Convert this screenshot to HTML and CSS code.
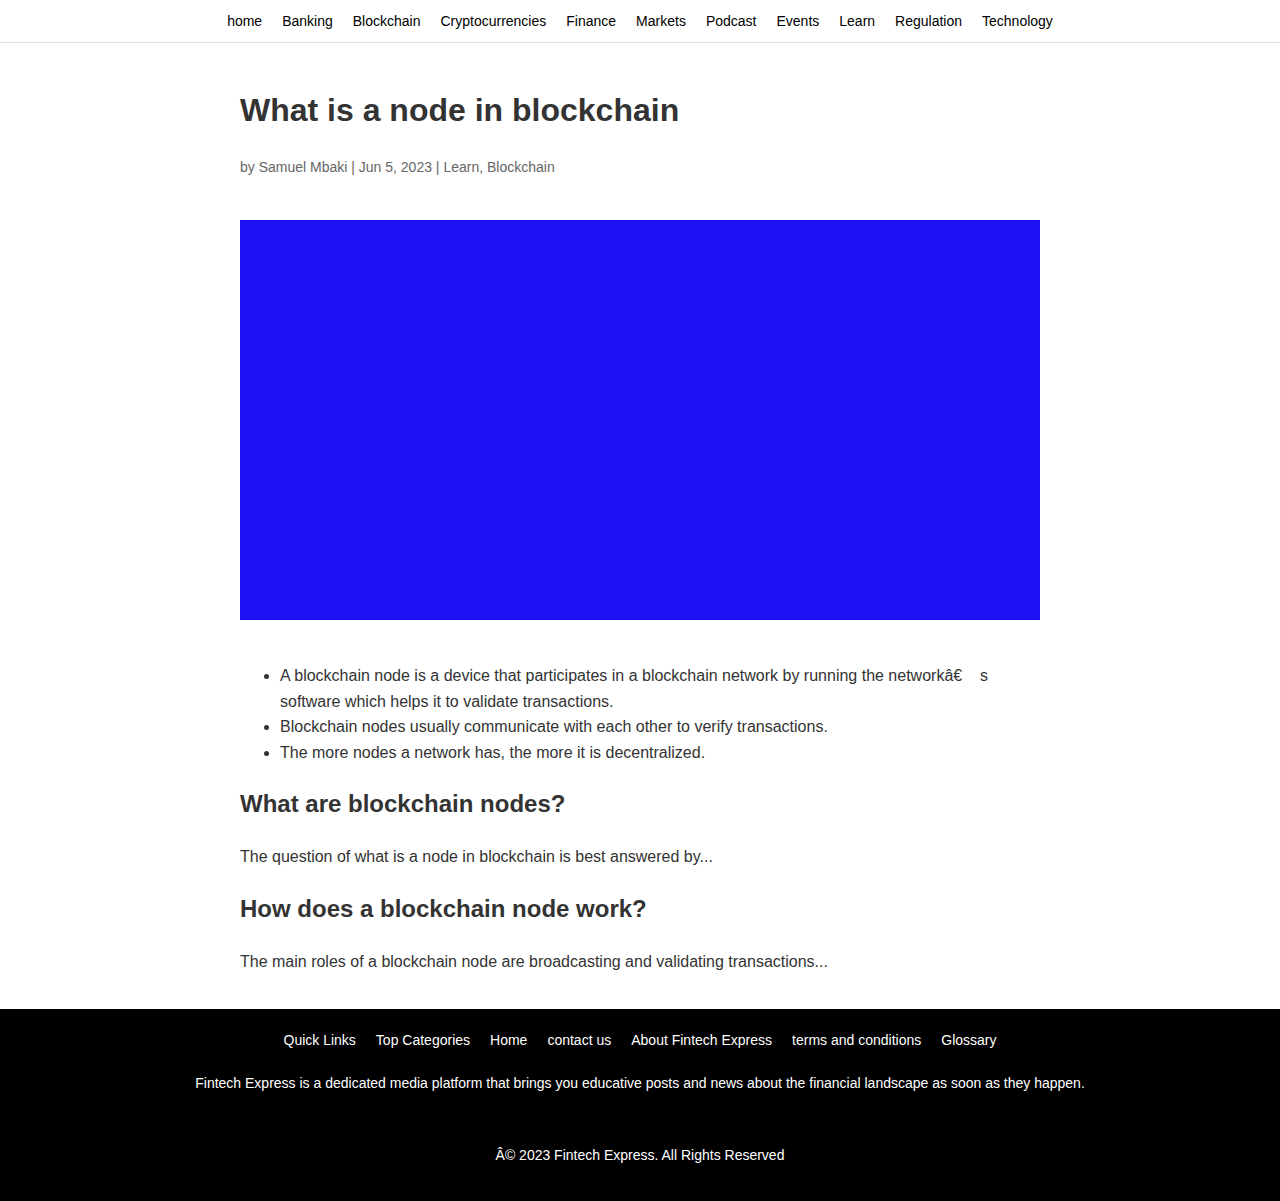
FILE: index.html
```html
<!DOCTYPE html>
<html lang="en">
<head>
<meta charset="utf-8">
<title>What is a node in blockchain</title>
<link rel="stylesheet" href="styles.css">
</head>
<body>
<header class="topbar">
  <nav class="nav">
    <a href="#">home</a>
    <a href="#">Banking</a>
    <a href="#">Blockchain</a>
    <a href="#">Cryptocurrencies</a>
    <a href="#">Finance</a>
    <a href="#">Markets</a>
    <a href="#">Podcast</a>
    <a href="#">Events</a>
    <a href="#">Learn</a>
    <a href="#">Regulation</a>
    <a href="#">Technology</a>
  </nav>
</header>
<main class="article">
  <h1 class="title">What is a node in blockchain</h1>
  <p class="meta">by Samuel Mbaki | Jun 5, 2023 | Learn, Blockchain</p>
  <div class="hero"></div>
  <ul class="points">
    <li>A blockchain node is a device that participates in a blockchain network by running the networkâ€&nbsp;&nbsp;&nbsp;&nbsp;s software which helps it to validate transactions.</li>
    <li>Blockchain nodes usually communicate with each other to verify transactions.</li>
    <li>The more nodes a network has, the more it is decentralized.</li>
  </ul>
  <h2 class="subhead">What are blockchain nodes?</h2>
  <p class="para">The question of what is a node in blockchain is best answered by...</p>
  <h2 class="subhead">How does a blockchain node work?</h2>
  <p class="para">The main roles of a blockchain node are broadcasting and validating transactions...</p>
</main>
<footer class="footer">
  <nav class="footer-links">
    <a href="#">Quick Links</a>
    <a href="#">Top Categories</a>
    <a href="#">Home</a>
    <a href="#">contact us</a>
    <a href="#">About Fintech Express</a>
    <a href="#">terms and conditions</a>
    <a href="#">Glossary</a>
  </nav>
  <p class="about">Fintech Express is a dedicated media platform that brings you educative posts and news about the financial landscape as soon as they happen.</p>
  <p class="copy">Â© 2023 Fintech Express. All Rights Reserved</p>
</footer>
</body>
</html>
```

FILE: styles.css
```css
* { box-sizing: border-box; }
html, body { margin: 0; padding: 0; }
body {
  font-family: "Liberation Sans", Arial, sans-serif;
  color: #333;
  background: #fff;
}
a { text-decoration: none; color: inherit; }

.topbar {
  height: 43px;
  border-bottom: 1px solid #ddd;
  display: flex;
  align-items: center;
  justify-content: center;
}
.nav {
  display: flex;
  gap: 20px;
  font-size: 14px;
  line-height: 20px;
}
.nav a { color: #000; }

.article {
  width: 800px;
  margin: 0 auto;
  padding: 45px 0 35px;
}
.title {
  margin: 0;
  font-size: 32px;
  line-height: 44px;
  font-weight: 700;
  color: #333;
}
.meta {
  margin: 25px 0 0;
  font-size: 14px;
  line-height: 20px;
  color: #666;
}
.hero {
  margin-top: 43px;
  height: 400px;
  background: #1e12f5;
}
.points {
  margin: 43px 0 0;
  padding-left: 40px;
  font-size: 16px;
  line-height: 25.6px;
}
.subhead {
  margin: 25px 0 0;
  font-size: 24px;
  line-height: 28.8px;
  font-weight: 700;
}
.para {
  margin: 25px 0 0;
  font-size: 16px;
  line-height: 25.6px;
}

.footer {
  background: #000;
  color: #fff;
  text-align: center;
  padding: 21px 0 36px;
  font-size: 14px;
  line-height: 20px;
}
.footer-links {
  display: flex;
  justify-content: center;
  gap: 20px;
}
.about {
  margin: 23px 0 0;
}
.copy {
  margin: 52px 0 0;
}
```
